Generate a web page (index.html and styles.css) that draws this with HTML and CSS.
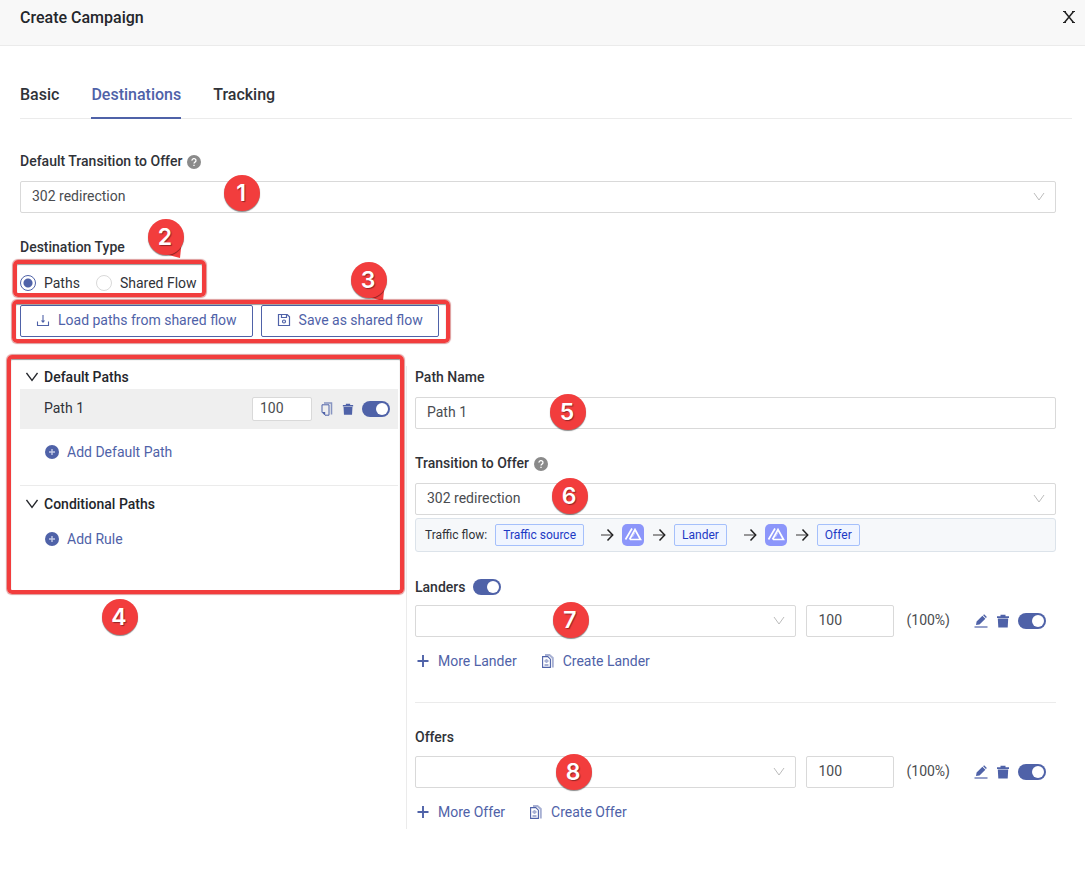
FILE: index.html
```html
<!DOCTYPE html>
<html lang="en">
<head>
<meta charset="utf-8">
<meta name="viewport" content="width=device-width, initial-scale=1">
<title>Create Campaign</title>
<link rel="stylesheet" href="styles.css">
</head>
<body>
<svg class="sprite" aria-hidden="true">
  <symbol id="chevron" viewBox="0 0 12 12"><path d="M1 2l5 7 5-7" fill="none" stroke="currentColor"/></symbol>
  <symbol id="chevron-dark" viewBox="0 0 12 12"><path d="M.5 2L6 9.500 11.500 2" fill="none" stroke="currentColor" stroke-width="1.300"/></symbol>
  <symbol id="help" viewBox="0 0 14 14"><circle cx="7" cy="7" r="7" fill="#8a8a8a"/><path d="M5 5.600a2 1.900 0 1 1 3 1.500c-.8.500-1 .7-1 1.400M7 9.700v1.400" fill="none" stroke="#fff" stroke-width="1.300"/></symbol>
  <symbol id="download" viewBox="0 0 14 14"><path d="M1.500 8.500v4h11v-4" fill="none" stroke="currentColor" stroke-width="1.100"/><path d="M7 2v7" stroke="currentColor" stroke-width="1.100"/><path d="M4.800 7.500h4.400L7 10z" fill="currentColor"/></symbol>
  <symbol id="save" viewBox="0 0 14 14"><path d="M1.500 1.500h8.700l2.300 2.300v8.700h-11zM4.500 1.500v3h5v-3" fill="none" stroke="currentColor" stroke-width="1.200"/><circle cx="7" cy="8.500" r="1.500" fill="none" stroke="currentColor" stroke-width="1.200"/></symbol>
  <symbol id="plus-circle" viewBox="0 0 14 14"><circle cx="7" cy="7" r="7" fill="#4f62a8"/><path d="M7 4v6M4 7h6" stroke="#c3cae6" stroke-width="1.400"/></symbol>
  <symbol id="plus" viewBox="0 0 14 14"><path d="M7 1v12M1.500 7h11" stroke="currentColor" stroke-width="1.900"/></symbol>
  <symbol id="copy" viewBox="0 0 14 14"><path d="M4 1h7.500v11.500" fill="none" stroke="currentColor" stroke-opacity=".65" stroke-width="1.500"/><path d="M2 2.800h7v10.400H5l-3-3z" fill="none" stroke="currentColor" stroke-width="1"/><path d="M2 10h3.200v3.200z" fill="currentColor"/></symbol>
  <symbol id="trash" viewBox="0 0 14 14"><path d="M1 2.200h3.500V.8h5v1.400H13V4H1zM1.800 4.600h10.400l-.5 9h-9.400z" fill="currentColor"/></symbol>
  <symbol id="edit" viewBox="0 0 14 14"><path d="M2 11l.6-3.500L8.400 1.700l3 3-5.900 5.900zM9.100 1.200l1-.9 2.800 2.800-1 1z" fill="currentColor"/><path d="M.5 13h13" stroke="currentColor" stroke-width="1.200"/></symbol>
  <symbol id="docs" viewBox="0 0 14 14"><path d="M4 1h4.500l3.300 3v9.500" fill="none" stroke="currentColor" stroke-opacity=".5" stroke-width="2"/><path d="M1.600 2.600h5.200l2.600 2.600v8.200H1.600z" fill="#fff" stroke="currentColor" stroke-width="1.100"/><path d="M5.500 5v4M3.500 7h4" stroke="currentColor" stroke-opacity=".5" stroke-width="1.900"/><path d="M3.500 11h4" stroke="currentColor"/></symbol>
  <symbol id="arrow" viewBox="0 0 14 14"><path d="M1 7h11" stroke="#777" stroke-width="1.500"/><path d="M7.500 1.500L12.700 7l-5.200 5.500" fill="none" stroke="#222" stroke-width="1.500"/></symbol>
  <symbol id="brand" viewBox="0 0 22 22"><rect width="22" height="22" rx="5" fill="#8c96fa"/><path d="M3.500 15.500L10 4.500M8 15.500h10.500L13 5.500 7.500 15.500" fill="none" stroke="#fff" stroke-width="1.700"/><path d="M10.500 13l2.500-4.500" stroke="#fff" stroke-opacity=".5"/></symbol>
</svg>

<header class="page-header">
  <h1 class="page-title">Create Campaign</h1>
  <button class="close" type="button" aria-label="Close"><svg class="close-icon" viewBox="0 0 14 14"><path d="M2.500 1.500l9 11M11.500 1.500l-9 11" stroke="#222" stroke-width="1.500"/><path d="M1 1.500h3M10 1.500h3M1 12.500h3M10 12.500h3" stroke="#222"/></svg></button>
</header>

<main class="content">
  <nav class="tabs">
    <a class="tab" href="#basic">Basic</a>
    <a class="tab tab-active" href="#destinations">Destinations</a>
    <a class="tab" href="#tracking">Tracking</a>
  </nav>

  <form class="form">
    <label class="label" for="transition">Default Transition to Offer <svg class="help"><use href="#help"/></svg></label>
    <div class="select"><select id="transition"><option>302 redirection</option></select><svg class="caret"><use href="#chevron"/></svg></div>

    <fieldset class="type">
      <legend class="label">Destination Type</legend>
      <div class="radios">
        <label class="radio"><input type="radio" name="type" checked>Paths</label>
        <label class="radio"><input type="radio" name="type">Shared Flow</label>
      </div>
    </fieldset>

    <div class="buttons">
      <button class="button" type="button"><svg class="icon"><use href="#download"/></svg>Load paths from shared flow</button>
      <button class="button" type="button"><svg class="icon"><use href="#save"/></svg>Save as shared flow</button>
    </div>

    <div class="columns">
      <section class="paths">
        <h2 class="group"><svg class="icon-small"><use href="#chevron-dark"/></svg>Default Paths</h2>
        <div class="path-row">
          <span class="path-name">Path 1</span>
          <input class="box weight-small" type="text" value="100" aria-label="Path 1 weight">
          <button class="link" type="button" aria-label="Copy path"><svg class="icon"><use href="#copy"/></svg></button>
          <button class="link" type="button" aria-label="Delete path"><svg class="icon-small"><use href="#trash"/></svg></button>
          <input class="toggle" type="checkbox" checked aria-label="Enable path">
        </div>
        <button class="link add" type="button"><svg class="icon"><use href="#plus-circle"/></svg>Add Default Path</button>
        <div class="rules">
          <h2 class="group"><svg class="icon-small"><use href="#chevron-dark"/></svg>Conditional Paths</h2>
          <button class="link add" type="button"><svg class="icon"><use href="#plus-circle"/></svg>Add Rule</button>
        </div>
      </section>

      <section class="detail">
        <label class="label" for="path-name">Path Name</label>
        <input class="box" id="path-name" type="text" value="Path 1">

        <label class="label label-next" for="path-transition">Transition to Offer <svg class="help"><use href="#help"/></svg></label>
        <div class="select"><select id="path-transition"><option>302 redirection</option></select><svg class="caret"><use href="#chevron"/></svg></div>

        <div class="flow">
          <span>Traffic flow:</span>
          <span class="tag">Traffic source</span>
          <svg class="icon"><use href="#arrow"/></svg>
          <svg class="brand"><use href="#brand"/></svg>
          <svg class="icon"><use href="#arrow"/></svg>
          <span class="tag">Lander</span>
          <svg class="icon"><use href="#arrow"/></svg>
          <svg class="brand"><use href="#brand"/></svg>
          <svg class="icon"><use href="#arrow"/></svg>
          <span class="tag">Offer</span>
        </div>

        <div class="landers">
          <div class="landers-head"><label for="landers-on">Landers</label><input class="toggle" id="landers-on" type="checkbox" checked></div>
          <div class="target">
            <div class="select"><select aria-label="Lander"><option></option></select><svg class="caret"><use href="#chevron"/></svg></div>
            <input class="box weight" type="text" value="100" aria-label="Lander weight">
            <span class="percent">(100%)</span>
            <button class="link" type="button" aria-label="Edit lander"><svg class="icon"><use href="#edit"/></svg></button>
            <button class="link" type="button" aria-label="Delete lander"><svg class="icon"><use href="#trash"/></svg></button>
            <input class="toggle" type="checkbox" checked aria-label="Enable lander">
          </div>
          <div class="actions">
            <button class="link" type="button"><svg class="icon"><use href="#plus"/></svg>More Lander</button>
            <button class="link" type="button"><svg class="icon"><use href="#docs"/></svg>Create Lander</button>
          </div>
        </div>

        <div class="offers">
          <h2 class="label">Offers</h2>
          <div class="target">
            <div class="select"><select aria-label="Offer"><option></option></select><svg class="caret"><use href="#chevron"/></svg></div>
            <input class="box weight" type="text" value="100" aria-label="Offer weight">
            <span class="percent">(100%)</span>
            <button class="link" type="button" aria-label="Edit offer"><svg class="icon"><use href="#edit"/></svg></button>
            <button class="link" type="button" aria-label="Delete offer"><svg class="icon"><use href="#trash"/></svg></button>
            <input class="toggle" type="checkbox" checked aria-label="Enable offer">
          </div>
          <div class="actions">
            <button class="link" type="button"><svg class="icon"><use href="#plus"/></svg>More Offer</button>
            <button class="link" type="button"><svg class="icon"><use href="#docs"/></svg>Create Offer</button>
          </div>
        </div>
      </section>
    </div>
  </form>
</main>

<div class="frame frame-type"></div>
<div class="frame frame-buttons"></div>
<div class="frame frame-paths"></div>
<span class="badge badge-1">1</span>
<span class="badge badge-tail badge-2">2</span>
<span class="badge badge-tail badge-3">3</span>
<span class="badge badge-4">4</span>
<span class="badge badge-5">5</span>
<span class="badge badge-6">6</span>
<span class="badge badge-7">7</span>
<span class="badge badge-8">8</span>
</body>
</html>
```

FILE: styles.css
```css
* { box-sizing: border-box; }

body {
  margin: 0;
  position: relative;
  background: #fff;
  color: #303238;
  font: 14px/22px Roboto, "Liberation Sans", sans-serif;
}

svg { display: block; flex: none; }
.sprite { position: absolute; width: 0; height: 0; }

input, select, button { font: inherit; color: inherit; margin: 0; }

.page-header {
  display: flex;
  align-items: flex-start;
  justify-content: space-between;
  height: 46px;
  padding: 6px 9px 0 20px;
  background: #f8f8f8;
  border-bottom: 1px solid #ebebeb;
}
.page-title { margin: 0; color: #24262b; font-size: 16px; font-weight: 500; line-height: 24px; }
.close { padding: 4px 0; border: 0; background: none; }
.close-icon { width: 14px; height: 14px; }

.content { padding: 37px 13px 48px 20px; }

.tabs {
  display: flex;
  gap: 32px;
  border-bottom: 1px solid #ebebeb;
  font-size: 16px;
  font-weight: 500;
  line-height: 24px;
}
.tab {
  margin-bottom: -1px;
  padding-bottom: 10px;
  border-bottom: 2px solid transparent;
  color: inherit;
  text-decoration: none;
}
.tab-active { border-color: #4f62a8; color: #4f62a8; }

.form { padding: 31px 16px 0 0; }

.label {
  display: flex;
  align-items: center;
  gap: 5px;
  margin: 0 0 9px;
  padding: 0;
  font-size: 14px;
  font-weight: 500;
}
.label-next { margin-top: 23px; }
.help { width: 14px; height: 14px; margin-top: 2px; }

.select { display: grid; align-items: center; }
.select select, .caret { grid-area: 1 / 1; }
.select select, .box {
  width: 100%;
  height: 32px;
  padding: 0 11px 2px;
  appearance: none;
  background: #fff;
  border: 1px solid #d9d9d9;
  border-radius: 2px;
  color: #4a4c50;
}
.caret {
  justify-self: end;
  width: 12px;
  height: 12px;
  margin-right: 11px;
  color: #bcbcbc;
  pointer-events: none;
}

.type { margin: 23px 0 0; padding: 0; border: 0; }
.type .label { margin-bottom: 14px; }
.radios { display: flex; gap: 16px; }
.radio { display: flex; align-items: center; gap: 8px; }
.radio input {
  width: 16px;
  height: 16px;
  appearance: none;
  border: 1px solid #d9d9d9;
  border-radius: 50%;
}
.radio input:checked {
  border-color: #4f62a8;
  background: radial-gradient(#4f62a8 4px, #fff 5px);
}

.buttons { display: flex; gap: 8px; margin-top: 11px; }
.button {
  display: flex;
  align-items: center;
  gap: 8px;
  height: 32px;
  padding: 0 15px 2px;
  background: #fff;
  border: 1px solid #4f62a8;
  border-radius: 2px;
  color: #4f62a8;
}
.icon { width: 14px; height: 14px; }
.icon-small { width: 12px; height: 12px; }

.columns { display: grid; grid-template-columns: 387fr 649fr; margin-top: 29px; }
.paths { padding-right: 8px; border-right: 1px solid #ebebeb; }
.detail { padding: 0 0 6px 8px; }

.group {
  display: flex;
  align-items: center;
  gap: 6px;
  margin: 0;
  padding-left: 6px;
  color: #24262b;
  font-size: 14px;
  font-weight: 500;
}
.path-row {
  display: flex;
  align-items: center;
  gap: 8px;
  height: 40px;
  margin-top: 1px;
  padding: 0 8px 0 24px;
  background: #efefef;
}
.path-name { flex: 1; padding-bottom: 2px; }
.weight-small { width: 60px; height: 24px; padding: 0 7px 2px; }

.link {
  display: flex;
  align-items: center;
  gap: 8px;
  padding: 0;
  background: none;
  border: 0;
  color: #4f62a8;
}
.add { margin: 12px 0 0 25px; }
.rules { margin-top: 22px; padding-top: 7px; border-top: 1px solid #ebebeb; }
.rules .add { margin-top: 13px; }

.toggle {
  width: 28px;
  height: 16px;
  flex: none;
  appearance: none;
  background: #4f62a8;
  border-radius: 8px;
}
.toggle::before {
  content: "";
  display: block;
  width: 12px;
  height: 12px;
  margin: 2px 2px 2px 14px;
  background: #fff;
  border-radius: 50%;
}

.flow {
  display: flex;
  align-items: center;
  gap: 8px;
  height: 34px;
  margin-top: 3px;
  padding: 0 9px;
  background: #f6f8fa;
  border: 1px solid #dce3ea;
  border-radius: 3px;
  font-size: 12px;
}
.tag {
  padding: 0 7px;
  background: #f0f5ff;
  border: 1px solid #a5c0fb;
  border-radius: 2px;
  color: #1d39c4;
  line-height: 20px;
}
.tag + .icon { margin-left: 8px; }
.brand { width: 22px; height: 22px; }

.landers { padding-bottom: 30px; border-bottom: 1px solid #ebebeb; }
.landers-head {
  display: flex;
  align-items: center;
  gap: 8px;
  margin: 24px 0 7px;
  font-weight: 500;
}
.offers { margin-top: 23px; }
.offers .label { margin-bottom: 8px; }

.target { display: flex; align-items: center; gap: 8px; padding-right: 10px; }
.target .select { flex: 1; }
.weight { width: 88px; margin-left: 2px; }
.percent { margin: 0 16px 0 4px; padding-bottom: 2px; color: #4a4c50; }
.actions { display: flex; gap: 24px; margin: 13px 0 0 1px; }

/* Numbered callouts over the form */
.frame {
  position: absolute;
  border: 4px solid #f23d3d;
  border-radius: 5px;
  box-shadow: 0 0 1px 1px #a006, inset 0 1px 1px #0006;
  pointer-events: none;
}
.frame-type { left: 13px; top: 260px; width: 193px; height: 37px; }
.frame-buttons { left: 12px; top: 300px; width: 438px; height: 43px; }
.frame-paths { left: 7px; top: 355px; width: 397px; height: 239px; }

.badge {
  position: absolute;
  width: 36px;
  height: 36px;
  padding-right: 2px;
  background: #f23d3d;
  border-radius: 50%;
  box-shadow: 0 1px 1px #0007;
  color: #fff;
  font: 600 23px/37px Inter, "Open Sans", sans-serif;
  text-align: center;
  text-shadow: 1px 1px 1px #0006;
}
.badge-tail::before {
  content: "";
  position: absolute;
  z-index: -1;
  left: 14px;
  top: 20px;
  width: 20px;
  height: 19px;
  background: #f23d3d;
  clip-path: polygon(0 75%, 100% 0, 90% 100%);
}
.badge-1 { left: 224px; top: 175px; }
.badge-2 { left: 148px; top: 219px; }
.badge-3 { left: 351px; top: 262px; }
.badge-4 { left: 102px; top: 599px; }
.badge-5 { left: 550px; top: 394px; }
.badge-6 { left: 552px; top: 478px; }
.badge-7 { left: 553px; top: 602px; }
.badge-8 { left: 556px; top: 754px; }
```
